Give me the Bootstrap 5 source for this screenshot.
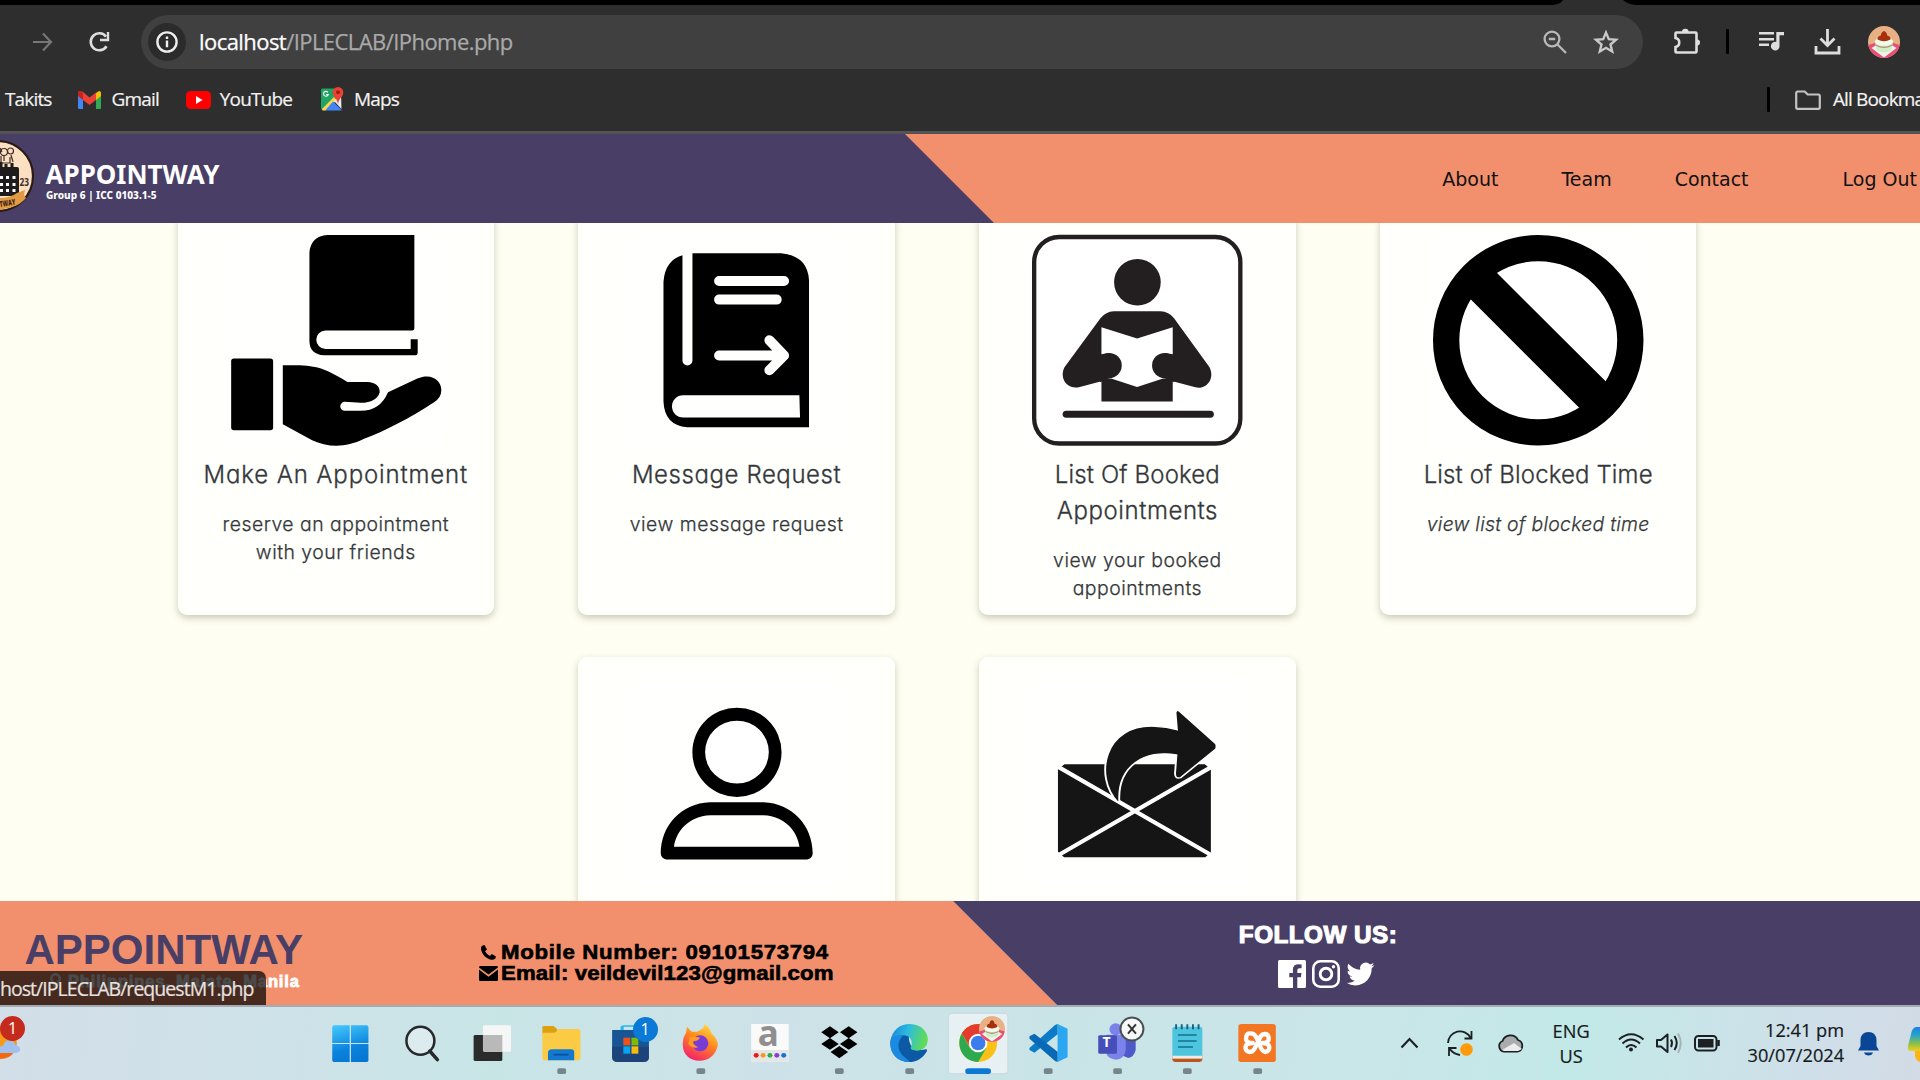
<!DOCTYPE html>
<html lang="en">
<head>
<meta charset="utf-8">
<meta name="viewport" content="width=device-width, initial-scale=1">
<title>Appointway</title>
<link href="https://cdn.jsdelivr.net/npm/bootstrap@5.3.0/dist/css/bootstrap.min.css" rel="stylesheet">
<style>
  html, body { height: 100%; }
  body { font-family: "Open Sans", "Noto Sans", sans-serif; background: #fefff2; line-height: 1; }
  svg { display: block; overflow: visible; flex: none; }
  .screen { width: 1920px; height: 1080px; }

  /* browser chrome */
  .tabstrip { height: 5px; background: #000; padding-left: 1553px; }
  .browser { height: 126px; background: #2e2e2e; }
  .addr-row { height: 73px; padding-left: 30px; color: #dedede; }
  .reload { margin-left: 33px; }
  .omnibox { width: 1502px; height: 54px; border-radius: 27px; background: #404040; margin-left: 30px; padding: 0 24px 0 7px; flex: none; }
  .info-dot { width: 38px; height: 38px; border-radius: 50%; background: #2b2b2b; }
  .url { font-size: 22px; letter-spacing: -.56px; color: #a9a9a9; margin: -2px 0 0 13px; white-space: nowrap; -webkit-text-stroke: .25px; }
  .url b { font-weight: 400; color: #fff; }
  .omni-tools { gap: 26px; }
  .puzzle { margin-left: 30px; }
  .tool { margin-left: 30px; }
  .vbar { width: 3px; height: 25px; background: #000; border-radius: 1px; flex: none; }
  .marks { height: 53px; padding: 0 0 10px 5px; font-size: 19px; letter-spacing: -.85px; color: #f2f2f2; white-space: nowrap; -webkit-text-stroke: .2px; }
  .mark-sep { margin-left: 1368px; }
  .edge-line { height: 3px; background: #545456; }

  /* site header */
  .site-head { height: 89px; background: #f2906d; position: relative; z-index: 2; }
  .slant { position: absolute; inset: 0; }
  .head-in { position: relative; height: 89px; }
  .logo-clip { width: 35px; height: 72px; margin-top: -6px; }
  .brand-box { margin: 5px 0 0 10.500px; }
  .brand-a { font: 700 26px/26px "Noto Sans", sans-serif; color: #fff; }
  .brand-b { font: 800 11.3px/12px "Noto Sans", sans-serif; color: #fff; white-space: nowrap; transform: scaleX(.89); transform-origin: 0 0; margin-top: 2px; width: 130px; }
  .menu { font-family: "DejaVu Sans", sans-serif; font-size: 19px; color: #111; white-space: nowrap; padding: 1px 3px 0 0; gap: 63px; }
  .menu a { color: inherit; text-decoration: none; }
  .menu a:last-child { margin-left: 31px; }

  /* cards */
  .site-main { height: 678px; overflow: hidden; padding-right: 46px; background: #fefff2; }
  .deck { width: 1560px; margin: -10px auto 0; gap: 42.5px 84.2px; }
  .tile { width: 316.6px; height: 401.5px; border-radius: 9px; background: #fffffb; box-shadow: 0 3px 7px rgba(60,60,30,.27); padding-top: 22px; text-align: center; font-family: Inter, sans-serif; font-weight: 300; font-feature-settings: "cv11"; color: #34373b; }
  .pic { width: 210.5px; height: 210.5px; margin: 0 auto; background: #fffffe; }
  .tile h3 { font-size: 24px; line-height: 36px; font-weight: 300; margin: 11px 0 17px; -webkit-text-stroke: .3px; }
  .tile p { font-size: 19.4px; line-height: 28.7px; margin: 0; letter-spacing: .5px; -webkit-text-stroke: .25px; }
  .ls-a { letter-spacing: .86px; } .ls-b { letter-spacing: .58px; } .ls-c { letter-spacing: .13px; }
  .tile p.ls-i { letter-spacing: .27px; }

  /* site footer */
  .site-foot { height: 104px; position: relative; z-index: 2; }
  .foot-in { position: relative; }
  .foot-col { white-space: nowrap; }
  .foot-left { width: 477px; }
  .foot-name { font: 700 42px/42px "Liberation Sans", sans-serif; color: #493f66; margin: 28px 0 0 24.500px; }
  .foot-place { font: 700 16.5px/18px "Liberation Sans", sans-serif; letter-spacing: .84px; color: #fff; -webkit-text-stroke: .8px #fff; margin: 1px 0 0 50px; }
  .foot-info { width: 470px; font: 700 19.5px/21.3px "Liberation Sans", sans-serif; color: #000; -webkit-text-stroke: .6px #000; padding-top: 41px; }
  .foot-info i { width: 24px; }
  .foot-info span { transform: scaleX(1.14); transform-origin: 0 50%; }
  .ls-m { letter-spacing: .6px; } .ls-e { letter-spacing: .1px; }
  .foot-right { width: 160px; margin-left: 291px; padding-top: 22px; }
  .follow { font: 700 23px/24px "Liberation Sans", sans-serif; letter-spacing: .45px; color: #fff; -webkit-text-stroke: 1.1px #fff; transform: scaleX(1.055); }
  .social { gap: 6px; margin: 13px 0 0 17px; }
  .status { position: absolute; left: 0; bottom: 0; width: 266px; height: 34px; background: rgba(0,0,0,.71); border-top-right-radius: 7px; color: #e8e2e0; font-size: 19.5px; line-height: 36px; letter-spacing: -.96px; white-space: nowrap; -webkit-text-stroke: .2px; }

  /* taskbar */
  .taskbar { height: 75px; border-top: 2px solid #a4acb3; background: linear-gradient(100deg, #d2dee8 0%, #cfe1e9 12%, #c8e5e6 26%, #cde2e8 40%, #c9e4e6 55%, #c9e6e8 72%, #c2e9e7 82%, #cfdfe9 94%, #d2dbe6 100%); color: #15191c; }
  .news { width: 316.700px; }
  .cell { width: 69.6px; height: 73px; position: relative; }
  .tip { position: absolute; border-radius: 50%; color: #fff; text-align: center; }
  .tip-store { left: 38px; top: 10px; width: 25px; height: 25px; background: #0a7ad6; font-size: 16px; line-height: 25px; }
  .tip-news { left: 0; top: 9px; width: 25px; height: 25px; background: #c42b1c; font-size: 16px; line-height: 25px; }
  .tip-cake { position: absolute; left: 37px; top: 9px; }
  .amz { position: absolute; left: 24px; top: 9px; font: 700 35px/34px "Noto Sans", sans-serif; color: #8f8f8f; }
  .tms { position: absolute; left: 21px; top: 26px; font-size: 14px; font-weight: 700; color: #fff; line-height: 18px; }
  .tray { width: 630px; }
  .clock { font-size: 18.2px; line-height: 25px; white-space: nowrap; -webkit-text-stroke: .2px; }
  .lang { width: 62px; margin-top: 12px; }
  .time { width: 109px; margin-top: 11px; }
</style>
<script src="https://cdn.jsdelivr.net/npm/bootstrap@5.3.0/dist/js/bootstrap.bundle.min.js"></script>
</head>
<body class="overflow-hidden">
<svg width="0" height="0" class="position-absolute">
  <symbol id="cake" viewBox="0 0 32 32">
    <circle cx="16" cy="16" r="16" fill="#e8b185"/>
    <path d="M.3 19l8-2.500h15.400l8 2.500A16 16 0 0 1 .3 19z" fill="#e94f74"/>
    <path d="M3.500 22l5-3h15l5 3L16 31.500z" fill="#f3f3ee"/>
    <path d="M7 15h18l-1.500 9q-7.500 5-15 0z" fill="#cfeec6"/>
    <ellipse cx="16" cy="15.500" rx="9.200" ry="4.300" fill="#eefbe8"/>
    <path d="M8 18.500q8 4.500 16 0v1.300q-8 4.500-16 0z" fill="#b98a78"/>
    <path d="M9.500 13.500q0-3.500 3.300-4 .2-3.500 3.200-4.500 3 1 3.200 4.500 3.300.5 3.300 4-6.500 3.500-13 0z" fill="#a8300c"/>
  </symbol>
</svg>

<div class="screen d-flex flex-column overflow-hidden">
  <div class="tabstrip"><svg width="82" height="5"><path d="M0 5Q8 4 10 0H70Q74 4 82 5z" fill="#2e2e2e"/></svg></div>

  <div class="browser">
    <div class="addr-row d-flex align-items-center">
      <svg width="24" height="24" viewBox="0 0 24 24" fill="none" stroke="#777" stroke-width="2.2"><path d="M3 12h18M13 3.500l8 8.500-8 8.500"/></svg>
      <svg class="reload" width="24" height="24" viewBox="0 0 24 24" fill="none" stroke="#dedede" stroke-width="2.6"><path d="M19.500 16.200A8.500 8.500 0 1 1 19 6.600"/><path d="M21 2v8h-8" stroke-width="2.4"/></svg>
      <div class="omnibox d-flex align-items-center">
        <div class="info-dot d-flex align-items-center justify-content-center">
          <svg width="22" height="22" viewBox="0 0 22 22"><circle cx="11" cy="11" r="9.600" fill="none" stroke="#eee" stroke-width="2.400"/><path d="M11 9.600v6.600M11 5.600v2.300" stroke="#eee" stroke-width="2.400"/></svg>
        </div>
        <div class="url"><b>localhost</b>/IPLECLAB/IPhome.php</div>
        <div class="omni-tools d-flex align-items-center ms-auto">
          <svg width="24" height="24" viewBox="0 0 24 24" fill="none" stroke="#b9b9b9" stroke-width="2.300"><circle cx="9" cy="9" r="7.400"/><path d="M14.300 14.300L23 23M5.800 9h6.400"/></svg>
          <svg width="26" height="26" viewBox="0 0 26 26" fill="none" stroke="#c9c9c9" stroke-width="2.400"><path d="M13 3.600l2.800 6.600 7.200.6-5.500 4.700 1.700 7L13 18.800l-6.200 3.700 1.700-7L3 10.800l7.200-.6z"/></svg>
        </div>
      </div>
      <svg class="puzzle" width="27" height="27" viewBox="0 0 27 27"><path d="M3.500 4.500h19a1 1 0 0 1 1 1v18a1 1 0 0 1-1 1h-19a1 1 0 0 1-1-1V19c5-1 5-8 0-9V5.500a1 1 0 0 1 1-1z" fill="none" stroke="#dedede" stroke-width="2.600"/><path d="M9 4a3.300 3.300 0 0 1 6.600 0zM24 11.500a3 3 0 0 1 0 6z" fill="#dedede"/></svg>
      <div class="vbar ms-4 me-0" style="transform:translateX(2px)"></div>
      <svg class="tool ms-auto" width="25" height="22" viewBox="0 0 25 22" fill="#dedede"><path d="M0 1h15v2.400H0zM0 7h15v2.400H0zM0 12.500h10v2.400H0zM17.300 1H25v3.200h-4.500V15a4.300 4.300 0 1 1-3.200-4z"/></svg>
      <svg class="tool" width="27" height="27" viewBox="0 0 27 27" fill="none" stroke="#dedede" stroke-width="2.800"><path d="M13.500 1v16M6.500 10.500l7 7 7-7M2 18v7h23v-7"/></svg>
      <svg width="32" height="32" style="margin:0 20px 0 27px"><use href="#cake"/></svg>
    </div>
    <div class="marks d-flex align-items-center">
      <span>Takits</span>
      <svg width="23" height="18" viewBox="0 0 23 18" style="margin-left:26.500px"><path d="M0 2v15a1 1 0 0 0 1 1h4V6z" fill="#4285f4"/><path d="M23 2v15a1 1 0 0 1-1 1h-4V6z" fill="#34a853"/><path d="M18 2l3-2q2 0 2 2v3l-5 4z" fill="#fbbc04"/><path d="M0 5V2q0-2 2-2l3 1 6.500 5.500L18 1.500V9l-6.500 5L5 9z" fill="#ea4335"/><path d="M0 2q0-2 2-2l3 2v7L0 5z" fill="#c5221f"/></svg>
      <span style="margin-left:10.500px">Gmail</span>
      <svg width="25" height="18" viewBox="0 0 25 18" style="margin-left:27px"><rect width="25" height="18" rx="4.500" fill="#f00"/><path d="M10 5l6.500 4-6.500 4z" fill="#fff"/></svg>
      <span style="margin-left:9px">YouTube</span>
      <svg width="23" height="24" viewBox="0 0 23 24" style="margin:-2px 0 0 29px"><path d="M0 3a1.500 1.500 0 0 1 1.500-1.500H13L16 8 2 23q-2 0-2-2z" fill="#1fa463"/><path d="M1 22L13 10l3 3L5 23.500H1.500z" fill="#fdd84b"/><path d="M4 23.500l8-9 9 9z" fill="#4285f4"/><path d="M13 14l7-7 .5 15z" fill="#e8eaf0"/><path d="M6.800 5.300A2.400 2.400 0 1 0 7.200 7.500H5" fill="none" stroke="#fff" stroke-width="1.100"/><path d="M17 0a5.300 5.300 0 0 1 5.300 5.300C22.300 10 18 11 17 17c-1-6-5.300-7-5.300-11.700A5.300 5.300 0 0 1 17 0z" fill="#ea4335"/><circle cx="17" cy="5.300" r="2" fill="#9c1f16"/></svg>
      <span style="margin-left:10px">Maps</span>
      <div class="vbar mark-sep"></div>
      <svg width="26" height="20" viewBox="0 0 26 20" fill="none" stroke="#c4c4c4" stroke-width="2.200" style="margin-left:25px"><path d="M1.200 3a1.500 1.500 0 0 1 1.500-1.500h7l3 3h10.600A1.500 1.500 0 0 1 24.800 6v11.300a1.500 1.500 0 0 1-1.500 1.500H2.700a1.500 1.500 0 0 1-1.500-1.500z"/></svg>
      <span style="margin-left:12px">All Bookmarks</span>
    </div>
  </div>
  <div class="edge-line"></div>

  <header class="site-head">
    <svg class="slant" width="1920" height="89"><path d="M0 0H905L994 89H0z" fill="#493f66"/></svg>
    <div class="head-in d-flex align-items-center">
      <svg class="logo-clip" viewBox="0 0 35 72">
        <circle cx="-2" cy="36" r="35" fill="#fde0c2" stroke="#2c1a14" stroke-width="2.200"/>
        <g fill="none" stroke="#3c2c26" stroke-width="1.200"><circle cx="4" cy="12" r="3.500"/><circle cx="10.500" cy="11" r="3"/><path d="M0 8l2 4M1 16v7h9v-6M4 16v5M11 15l2 7"/></g>
        <path d="M-10 27H17q2 0 2 2V56H-10z" fill="#1e1b1d"/>
        <path d="M1 22v7M6 24v5M12 23v6" stroke="#1e1b1d" stroke-width="3"/>
        <g fill="#fff"><path d="M0 36h3v3H0zM6 36h3v3H6zM12.500 36h3v3h-3zM0 43h3v3H0zM6 43h3v3H6zM12.500 43h3v3h-3zM0 49h3v3H0zM6 49h3v3H6zM12.500 49h3v3h-3z"/></g>
        <text x="19.500" y="46" font-size="10.500" textLength="9.500" lengthAdjust="spacingAndGlyphs" font-weight="700" fill="#3c2c26">23</text>
        <path d="M0 58q10 0 17-5l8-3-1 5 2 3q-6 7-14 9l-12 3z" fill="#e39a45"/>
        <text x="0" y="67" font-size="8" font-weight="800" textLength="16" lengthAdjust="spacingAndGlyphs" fill="#3a1f10" transform="rotate(-9 0 67)">TWAY</text>
      </svg>
      <div class="brand-box"><div class="brand-a">APPOINTWAY</div><div class="brand-b">Group 6 | ICC 0103.1-5</div></div>
      <nav class="menu d-flex ms-auto">
        <a href="#">About</a><a href="#">Team</a><a href="#">Contact</a><a href="#">Log Out</a>
      </nav>
    </div>
  </header>

  <main class="site-main">
    <div class="deck d-flex flex-wrap justify-content-center">
      <div class="tile">
        <svg class="pic" viewBox="181 60 631 632">
          <path d="M470 60H731V341q0 6-6 6H464a27 27 0 0 0 0 55H720V373H741V414q0 7-7 7H460Q416 418 416 378V112Q420 64 470 60z"/>
          <rect x="181" y="431" width="126" height="215" rx="8"/>
          <path d="M336 451C430 450 450 452 530 501H590Q627 503 627 532 618 563 570 564L522 561a13 13 0 0 0 0 27H570Q628 588 652 532L740 491C785 472 812 500 812 525Q812 548 790 562C720 608 640 650 580 672 520 702 468 696 424 676L336 628z"/>
        </svg>
        <h3 class="ls-a">Make An Appointment</h3>
        <p>reserve an appointment<br>with your friends</p>
      </div>
      <div class="tile">
        <svg class="pic" viewBox="184 60 631 632">
          <path d="M338 121V437a15 15 0 0 0 30 0V115H634Q714 122 718 196V637H352Q284 632 281 560V200Q286 136 338 121z"/>
          <path d="M340 541H689L691 608H340a33 33 0 0 1 0-67z" fill="#fffffe"/>
          <g fill="none" stroke="#fffffe" stroke-width="30" stroke-linecap="round" stroke-linejoin="round"><path d="M448 198H643M448 254H621M448 422H630M599 376L643 422 599 466"/></g>
        </svg>
        <h3 class="ls-b">Message Request</h3>
        <p>view message request</p>
      </div>
      <div class="tile">
        <svg class="pic" viewBox="187 60 631 632">
          <g fill="#231f20">
          <rect x="193" y="66" width="619" height="620" rx="75" fill="#fff" stroke="#231f20" stroke-width="13"/>
          <circle cx="503" cy="202" r="70"/>
          <path d="M432 289H572Q598 290 613 310L719 456C738 492 708 526 677 517L609 499V560H395V499L330 516C290 526 268 488 284 457L392 310Q408 290 432 289z"/>
          <path d="M395 337L502 371 609 337V491L580 491 502 516 424 491H395z" fill="#fff"/>
          <circle cx="418" cy="452" r="38"/><circle cx="585" cy="452" r="38"/>
          <path d="M390 419L418 414V490L390 502zM614 419L585 414V490L614 502z"/>
          </g>
          <path d="M289 598H722" stroke="#231f20" stroke-width="21" stroke-linecap="round"/>
        </svg>
        <h3><span class="ls-c">List Of Booked</span><br><span class="ls-b">Appointments</span></h3>
        <p>view your booked<br>appointments</p>
      </div>
      <div class="tile">
        <svg class="pic" viewBox="189.500 60 631 632">
          <circle cx="505" cy="376" r="276.500" fill="#fff" stroke="#000" stroke-width="79"/>
          <path d="M382 175L350 140 270 220 302 253 628 579 665 615 745 540 708 500z"/>
        </svg>
        <h3 class="ls-c">List of Blocked Time</h3>
        <p class="fst-italic ls-i">view list of blocked time</p>
      </div>
      <div class="tile">
        <svg class="pic" viewBox="129 101 446 632" preserveAspectRatio="none">
          <ellipse cx="353.500" cy="320.500" rx="80.500" ry="114.500" fill="#fff" stroke="none"/>
          <path fill-rule="evenodd" d="M259 321A94.500 134 0 0 1 448 321 94.500 134 0 0 1 259 321zM286 320.500A67.500 94.500 0 0 0 421 320.500 67.500 94.500 0 0 0 286 320.500z"/>
          <path fill-rule="evenodd" d="M296 471H410C470 474 514 540 514 625Q513 640 502 643H204Q193 640 192 625C192 540 236 474 296 471zM297 510C250 513 224 560 220 605H486C482 560 456 513 410 510z"/>
        </svg>
      </div>
      <div class="tile">
        <svg class="pic" viewBox="979 101 446 632" preserveAspectRatio="none">
          <g fill="#151515">
          <path d="M1048 357H1345L1358 372V622L1346 636H1047L1034 620V372z"/>
          <path d="M1036 366L1358 629M1358 366L1036 629" stroke="#fff" stroke-width="11"/>
          <path d="M1160 470C1110 395 1130 235 1240 243Q1265 244 1286 253L1283 202Q1286 190 1292 198L1369 296Q1371 303 1369 311L1294 397Q1282 402 1282 385L1285 329C1220 312 1160 360 1164 468z" stroke="#fff" stroke-width="4"/>
          </g>
        </svg>
      </div>
    </div>
  </main>

  <footer class="site-foot">
    <svg class="slant" width="1920" height="104"><path d="M0 0H953L1057 104H0z" fill="#f2906d"/><path d="M953 0H1920V104H1057z" fill="#493f66"/></svg>
    <div class="foot-in d-flex">
      <div class="foot-col foot-left">
        <div class="foot-name">APPOINTWAY</div>
        <div class="foot-place d-flex align-items-center"><svg width="11" height="17" viewBox="0 0 11 17" style="margin-right:7px"><path d="M5.500 1.300A4.200 4.200 0 0 1 9.700 5.500C9.700 9 6.500 11 5.500 15 4.500 11 1.300 9 1.300 5.500A4.200 4.200 0 0 1 5.500 1.300z" fill="none" stroke="#fff" stroke-width="2.500"/></svg>Philippines, Malate, Manila</div>
      </div>
      <div class="foot-col foot-info">
        <div class="d-flex align-items-center ls-m"><i><svg width="15" height="15" viewBox="0 0 15 15" style="margin-left:4px"><path d="M1 0.800L3.500 0 6 4.500 4 6.300Q6 10 9 11l1.800-1.900L15 11.500l-.8 2.300Q12 15.500 9 14.500 1.500 11.500 0 4.500-.3 2 1 .8z"/></svg></i><span>Mobile Number: 09101573794</span></div>
        <div class="d-flex align-items-center ls-e"><i><svg width="19" height="15" viewBox="0 0 19 15" style="margin-left:2px"><path d="M1 0H18q1 0 1 1.500L9.500 8.500 0 1.500Q0 0 1 0zM0 3.500L9.500 10.800 19 3.500V14q0 1-1 1H1q-1 0-1-1z"/></svg></i><span>Email: veildevil123@gmail.com</span></div>
      </div>
      <div class="foot-col foot-right d-flex flex-column align-items-center">
        <div class="follow">FOLLOW US:</div>
        <div class="social d-flex">
          <svg width="28" height="28" viewBox="0 0 28 28" fill="#fff"><path d="M1.500 0h25A1.500 1.500 0 0 1 28 1.500v25a1.500 1.500 0 0 1-1.500 1.500h-7.200V17.200h3.600l.6-4.300h-4.200v-2.700q0-2 2.100-2h2.200V4.400q-8.700-1.400-8.700 5.100v3.400h-3.600v4.300H15V28H1.500A1.500 1.500 0 0 1 0 26.500v-25A1.500 1.500 0 0 1 1.500 0z"/></svg>
          <svg width="28" height="28" viewBox="0 0 28 28" fill="none" stroke="#fff" stroke-width="2.600"><rect x="1.300" y="1.300" width="25.400" height="25.400" rx="7"/><circle cx="14" cy="14" r="5.800" stroke-width="2.900"/><circle cx="21.500" cy="6.700" r="1.700" fill="#fff" stroke="none"/></svg>
          <svg width="29" height="28" viewBox="0 0 24 24" fill="#fff"><path d="M23.950 4.570a10 10 0 0 1-2.820.780 4.960 4.960 0 0 0 2.160-2.720c-.95.550-2 .950-3.130 1.180a4.920 4.920 0 0 0-8.380 4.480C7.690 8.090 4.070 6.130 1.640 3.160a4.820 4.820 0 0 0-.67 2.480c0 1.710.870 3.210 2.190 4.100a4.900 4.900 0 0 1-2.230-.62v.060a4.920 4.920 0 0 0 3.950 4.830 5 5 0 0 1-2.210.080 4.940 4.940 0 0 0 4.600 3.420A9.870 9.870 0 0 1 0 19.540a13.990 13.990 0 0 0 7.560 2.210c9.050 0 14-7.500 14-13.990 0-.21 0-.42-.020-.63a9.940 9.940 0 0 0 2.460-2.550z"/></svg>
        </div>
      </div>
    </div>
    <div class="status">host/IPLECLAB/requestM1.php</div>
  </footer>

  <div class="taskbar d-flex">
    <div class="news position-relative">
      <svg width="24" height="73" viewBox="0 1007 24 73"><path d="M0 1028A17 17 0 0 1 17 1043 17 17 0 0 1 0 1058z" fill="#f79a1c"/><path d="M0 1052h14q-4 7-14 7z" fill="#f26a0c"/><path d="M-4 1052Q0 1045 3 1046 5 1039 12 1041 16 1044 15 1045 21 1046 20 1050 19 1053 15 1053H-4z" fill="#9fc1f2"/></svg>
      <span class="tip tip-news">1</span>
    </div>
    <!-- pinned applications -->
    <div class="cell"><svg width="100%" height="100%" viewBox="-6 21 111.400 219" preserveAspectRatio="none"><defs><linearGradient id="wn" gradientUnits="userSpaceOnUse" x1="20" y1="76" x2="78" y2="186"><stop stop-color="#45cafd"/><stop offset=".6" stop-color="#0a83dd"/><stop offset="1" stop-color="#0573cf"/></linearGradient></defs><path fill="url(#wn)" d="M22 76H48V129H20V80zM50 76H76L78 80V129H50zM20 132H48V186H22L20 182zM50 132H78V182L76 186H50z"/></svg></div>
    <div class="cell"><svg width="100%" height="100%" viewBox="105.400 21 111.400 219" preserveAspectRatio="none"><g transform="translate(160.500 122) scale(.533 1)" fill="none" stroke="#26282a"><circle r="42" stroke-width="7.500" fill="#dcebee"/><path d="M28 31L51 57" stroke-width="10.500" stroke-linecap="round"/></g></svg></div>
    <div class="cell"><svg width="100%" height="100%" viewBox="216.800 21 111.400 219" preserveAspectRatio="none"><rect x="245" y="105" width="46" height="78" rx="3" fill="#2b2b2b"/><rect x="260" y="76" width="45" height="79" rx="3" fill="#f5f6f6"/><path d="M260 105H291V155H263L260 152z" fill="#b9b9b9"/></svg></div>
    <div class="cell"><svg width="100%" height="100%" viewBox="328.200 21 111.400 219" preserveAspectRatio="none"><path d="M356 82Q356 78 359 78H374L380 88V105H356z" fill="#dca010"/><path d="M356 98H376L382 87H414Q417 88 417 94V174Q417 181 413 181H360Q356 181 356 174z" fill="#fccb45"/><path d="M365 181V156Q366 148 371 148H402Q407 148 407 156V181z" fill="#1279cf"/><path d="M374 164H398" stroke="#0b4f96" stroke-width="5"/><rect x="380" y="205" width="14" height="17" rx="4" fill="#76858c"/></svg></div>
    <div class="cell"><svg width="100%" height="100%" viewBox="439.600 21 111.400 219" preserveAspectRatio="none"><path d="M483 96V82Q483 78 487 78H506V96" fill="none" stroke="#25b9ee" stroke-width="5"/><path d="M467 90H526V174Q525 186 517 186H476Q468 186 467 174z" fill="#185594"/><path d="M467 140H526V174Q525 186 517 186H476Q468 186 467 174z" fill="#203c70" opacity=".7"/><path d="M485 113H496V136H485z" fill="#f1511b"/><path d="M498 113H509V136H498z" fill="#80bb03"/><path d="M485 139H496V161H485z" fill="#07a5ef"/><path d="M498 139H509V161H498z" fill="#fbbb09"/></svg><span class="tip tip-store">1</span></div>
    <div class="cell"><svg width="100%" height="100%" viewBox="551 21 111.400 219" preserveAspectRatio="none"><defs><linearGradient id="ff" x1=".8" y1="0" x2=".3" y2="1"><stop stop-color="#ffe14a"/><stop offset=".45" stop-color="#ff8a1e"/><stop offset="1" stop-color="#f4206a"/></linearGradient></defs><path fill="url(#ff)" d="M616 72C622 80 626 90 627 100Q638 118 637 138C633 168 622 182 608 182 592 182 581 162 581 134Q581 112 586 100L588 80Q592 90 596 95H604C610 90 616 84 616 72z"/><ellipse cx="609" cy="130" rx="13" ry="24" fill="#7a3ad8"/><path d="M592 112Q600 108 609 113 606 122 598 124 596 134 606 142 596 146 590 132z" fill="#ff9a22"/><rect x="603" y="205" width="14" height="17" rx="4" fill="#76858c"/></svg></div>
    <div class="cell"><svg width="100%" height="100%" viewBox="662.400 21 111.400 219" preserveAspectRatio="none"><rect x="690" y="72" width="60" height="113" fill="#fafafa"/><path d="M690 150H750V185H690z" fill="#e3e6e7"/><g><ellipse cx="698" cy="166" rx="4" ry="7" fill="#f01616"/><ellipse cx="709" cy="166" rx="4" ry="7" fill="#f59a1b"/><ellipse cx="720" cy="166" rx="4" ry="7" fill="#31a94c"/><ellipse cx="731" cy="166" rx="4" ry="7" fill="#8a3bd8"/><ellipse cx="742" cy="166" rx="4" ry="7" fill="#1172d8"/></g></svg><span class="amz">a</span></div>
    <div class="cell"><svg width="100%" height="100%" viewBox="773.800 21 111.400 219" preserveAspectRatio="none"><path d="M817 79L831 97 817 115 803 97zM847 79L861 97 847 115 833 97zM817 114L831 132 817 149 803 132zM847 114L861 132 847 149 833 132zM832 138L846 156 832 175 818 156z"/><rect x="825" y="205" width="14" height="17" rx="4" fill="#76858c"/></svg></div>
    <div class="cell"><svg width="100%" height="100%" viewBox="885.200 21 111.400 219" preserveAspectRatio="none"><defs><linearGradient id="eg" x1="0" y1="0" x2="1" y2=".2"><stop stop-color="#1683d8"/><stop offset=".5" stop-color="#2cbbe0"/><stop offset="1" stop-color="#5fdc5a"/></linearGradient></defs><path d="M913 129C913 100 925 90 944 90 940 120 944 160 970 148Q974 150 970 158C964 176 954 186 943 186 926 186 913 162 913 129z" fill="#0c5aa6"/><path fill="url(#eg)" d="M913 129C915 90 928 72 944 72 964 72 973 98 973 118 973 142 964 152 955 152 945 150 944 144 947 138 949 120 944 106 933 106 922 106 914 116 913 129z"/><path d="M913 129C914 110 924 104 934 106 924 122 922 152 936 172 942 182 946 186 943 186 924 186 912 160 913 129z" fill="#1a8be0"/><rect x="937" y="205" width="14" height="17" rx="4" fill="#76858c"/></svg></div>
    <div class="cell"><svg width="100%" height="100%" viewBox="996.600 21 111.400 219" preserveAspectRatio="none"><rect x="1007" y="40" width="95" height="181" rx="8" fill="#e7f1f3" stroke="#c3d2d6" stroke-width="1.500"/><g transform="translate(1054.500 129) scale(.533 1)"><circle r="57" fill="#fbc116"/><path d="M0 0L-49-28.500A57 57 0 0 1 49-28.500z" fill="#e33b2e"/><path d="M-49-28.500A57 57 0 0 0 0 57L25 14-25 14z" fill="#2da94f"/><path d="M0-26H50L49-28.500A57 57 0 0 0-49-28.500L-23 14z" fill="#e33b2e"/><circle r="28" fill="#fff"/><circle r="22" fill="#3b7ded"/></g><rect x="1034" y="205" width="41" height="17" rx="6" fill="#0b79d4"/></svg><svg class="tip-cake" width="26" height="26"><use href="#cake"/></svg></div>
    <div class="cell"><svg width="100%" height="100%" viewBox="1108 21 111.400 219" preserveAspectRatio="none"><path d="M1181 72L1197 86V172L1181 186z" fill="#2aa7f0"/><path d="M1181 72V103L1144 158 1136 150V144L1177 75z" fill="#0b7bc8"/><path d="M1181 186V155L1144 101 1136 109V116L1177 183z" fill="#0a69b4"/><rect x="1159" y="205" width="14" height="17" rx="4" fill="#76858c"/></svg></div>
    <div class="cell"><svg width="100%" height="100%" viewBox="1219.400 21 111.400 219" preserveAspectRatio="none"><path d="M1282 104H1307V150Q1304 172 1295 174 1288 172 1282 160z" fill="#5059c9"/><ellipse cx="1275" cy="88" rx="10" ry="18" fill="#7b83eb"/><path d="M1260 104H1291V150Q1289 178 1275 179 1262 176 1260 160z" fill="#7b83eb"/><rect x="1247" y="106" width="30" height="55" rx="3" fill="#464eb8"/><g transform="translate(1301 87) scale(.533 1)"><circle r="34.500" fill="#f6f8f8" stroke="#4a4f52" stroke-width="6"/><path d="M-12-14L12 14M12-14L-12 14" stroke="#333" stroke-width="6"/></g><rect x="1271" y="205" width="14" height="17" rx="4" fill="#76858c"/></svg><span class="tms">T</span></div>
    <div class="cell"><svg width="100%" height="100%" viewBox="1330.800 21 111.400 219" preserveAspectRatio="none"><path d="M1365 166H1413V180Q1412 186 1408 186H1370Q1366 186 1365 180z" fill="#b9561b"/><path d="M1365 160H1413V176H1365z" fill="#f0ebe6"/><path d="M1365 86Q1365 80 1369 80H1409Q1413 80 1413 86V167H1365z" fill="#4ec5df"/><path d="M1371 73V88M1380 73V88M1389 73V88M1398 73V88M1407 73V88" stroke="#17607a" stroke-width="3"/><path d="M1374 105H1404M1374 123H1404M1374 141H1398" stroke="#12718f" stroke-width="5"/><rect x="1382" y="205" width="14" height="17" rx="4" fill="#76858c"/></svg></div>
    <div class="cell"><svg width="100%" height="100%" viewBox="1442.200 21 111.400 219" preserveAspectRatio="none"><rect x="1470" y="72" width="60" height="114" rx="6" fill="#f37623"/><g transform="translate(1500.500 129) scale(.533 1)" fill="none" stroke="#fff" stroke-width="13" stroke-linejoin="round" stroke-linecap="round"><path d="M-28-28Q-12-32-5-20L5 0Q12 25 24 27 36 24 36 12 34 0 14 0 36 0 34-16 32-27 22-27 10-26 5-10L-5 10Q-12 27-24 27-36 24-36 12-34 0-14 0-36 0-34-16-33-26-28-28z"/></g><rect x="1494" y="205" width="14" height="17" rx="4" fill="#76858c"/></svg></div>

    <!-- system tray -->
    <div class="tray d-flex ms-auto">
      <svg width="250" height="73" viewBox="1290 1007 250 73" fill="none" stroke="#1c2023" stroke-width="1.800"><path d="M1401.500 1047.500L1409.500 1039 1417.500 1047.500" stroke-width="2.200"/><path d="M1448 1043A12 12 0 0 1 1470.500 1037.500M1471.500 1031V1038.500H1464.500M1460 1055Q1453 1054 1449.500 1048.500M1449 1056V1048H1456.500"/><circle cx="1466.500" cy="1049.500" r="6.300" fill="#ff9a0a" stroke="none"/><path d="M1504 1051.500A5.500 5.500 0 0 1 1502.500 1041 8.500 8.500 0 0 1 1518 1040 6 6 0 0 1 1518 1051.500z" fill="#a9abad"/><path d="M1502 1050L1514 1043 1522 1049 1518 1051H1504z" fill="#ececec" stroke="none"/></svg>
      <div class="clock lang text-center">ENG<br>US</div>
      <svg width="133" height="73" viewBox="1602 1007 133 73" fill="none" stroke="#1c2023" stroke-width="2"><path d="M1619 1039.500Q1631 1029 1643.500 1039.500M1622.500 1043.500Q1631 1035.500 1640 1043.500M1626 1047.500Q1631 1042.500 1636.500 1047.500"/><circle cx="1631" cy="1049.500" r="2" fill="#1c2023" stroke="none"/><path d="M1657 1040H1661L1667.500 1034.500V1052L1661 1046.500H1657z" stroke-linejoin="round"/><path d="M1671 1039.500Q1673 1043 1671 1047M1674.500 1036Q1679 1043 1674.500 1050"/><path d="M1678 1033.500Q1683.500 1043 1678 1053" stroke="#a4b5b9"/><rect x="1695" y="1036" width="21.500" height="14.500" rx="3.500"/><rect x="1698" y="1039" width="15.500" height="8.500" fill="#1c2023" stroke="none"/><path d="M1718.500 1040V1046" stroke-width="2.600"/></svg>
      <div class="clock time text-end">12:41 pm<br>30/07/2024</div>
      <svg width="76" height="73" viewBox="1844 1007 76 73"><path d="M1858 1050.500L1860.500 1046V1040Q1861 1032 1868.500 1032 1876 1032 1876.500 1040V1046L1879 1050.500zM1864 1052.500H1873Q1872 1055.500 1868.500 1055.500 1865 1055.500 1864 1052.500z" fill="#0a4596"/><defs><linearGradient id="cp" x1="0" y1="0" x2="0" y2="1"><stop stop-color="#1c7fe0"/><stop offset=".35" stop-color="#27a6c8"/><stop offset=".7" stop-color="#8cc04a"/><stop offset="1" stop-color="#f3cf1c"/></linearGradient></defs><path d="M1920 1027H1916Q1912 1028 1911 1034L1908 1046Q1907 1051 1911 1051H1920z" fill="url(#cp)"/><path d="M1915 1051H1920V1062Q1916 1061 1915 1056z" fill="#fdb515"/></svg>
    </div>
  </div>
</div>
</body>
</html>
